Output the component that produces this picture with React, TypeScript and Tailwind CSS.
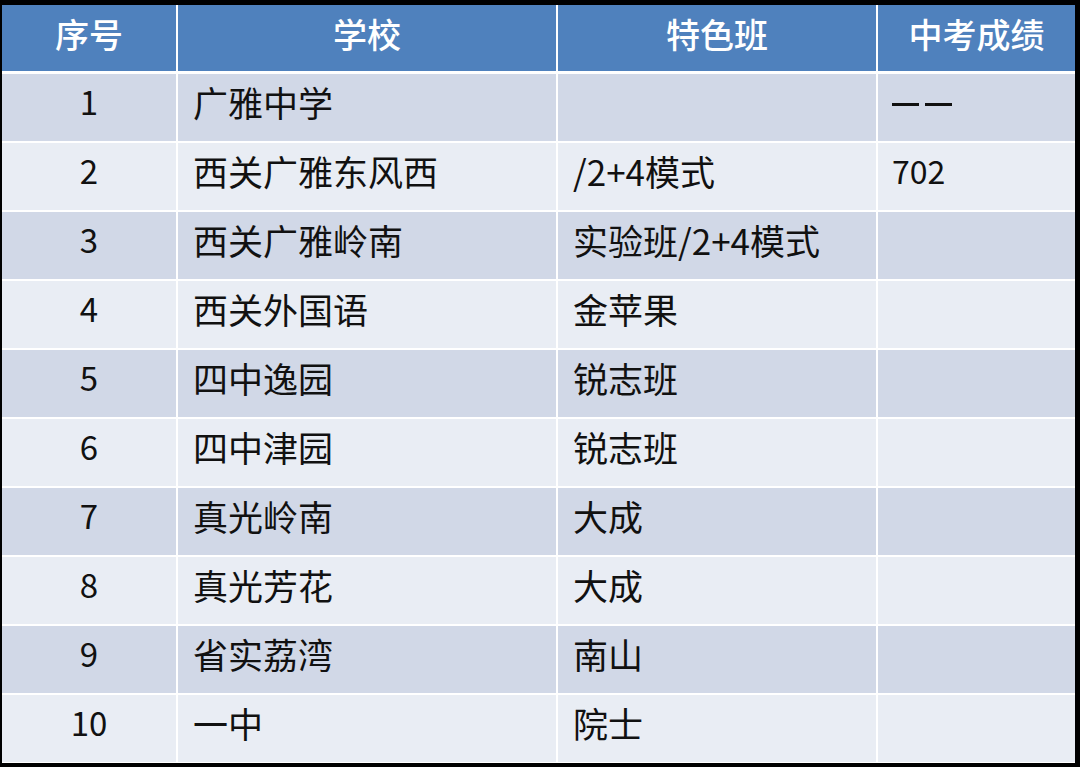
import React from "react";

const rows: [string, string, string, string][] = [
  ["1", "广雅中学", "", "——"],
  ["2", "西关广雅东风西", "/2+4模式", "702"],
  ["3", "西关广雅岭南", "实验班/2+4模式", ""],
  ["4", "西关外国语", "金苹果", ""],
  ["5", "四中逸园", "锐志班", ""],
  ["6", "四中津园", "锐志班", ""],
  ["7", "真光岭南", "大成", ""],
  ["8", "真光芳花", "大成", ""],
  ["9", "省实荔湾", "南山", ""],
  ["10", "一中", "院士", ""],
];

export default function App() {
  return (
    <div className="w-[1080px] h-[767px] bg-black pt-[5px] pl-[2px] overflow-hidden">
      <div className="w-[1073px] bg-white flex flex-col gap-[2px] pb-[1px] text-[#111] font-['Noto_Sans_CJK_SC',sans-serif]">
        <div className="h-[66px] mb-[1px] grid grid-cols-[174px_378px_318px_197px] gap-x-[2px] text-white text-[34px] font-medium leading-none">
          <div className="bg-[#4f81bd] flex items-center justify-center pb-[9px]">序号</div>
          <div className="bg-[#4f81bd] flex items-center justify-center pb-[9px]">学校</div>
          <div className="bg-[#4f81bd] flex items-center justify-center pb-[9px]">特色班</div>
          <div className="bg-[#4f81bd] flex items-center justify-center pb-[9px]">中考成绩</div>
        </div>
        {rows.map((r, i) => {
          const bg = i % 2 === 0 ? "bg-[#d1d8e7]" : "bg-[#e9edf4]";
          return (
            <div
              key={i}
              className="h-[67px] grid grid-cols-[174px_378px_318px_197px] gap-x-[2px] text-[35px] leading-none"
            >
              <div className={`${bg} flex items-center justify-center pb-[12px] text-[33px]`}>{r[0]}</div>
              <div className={`${bg} flex items-center pl-[15px] pb-[13px]`}>{r[1]}</div>
              <div className={`${bg} flex items-center pl-[15px] pb-[13px]`}>{r[2]}</div>
              <div className={`${bg} flex items-center pl-[14px] pb-[13px]`}>
                {r[3] === "——" ? (
                  <span className="flex gap-[6px] pt-[6px]">
                    <span className="block w-[27px] h-[3px] bg-[#111]" />
                    <span className="block w-[27px] h-[3px] bg-[#111]" />
                  </span>
                ) : (
                  <span className="text-[32px]">{r[3]}</span>
                )}
              </div>
            </div>
          );
        })}
      </div>
    </div>
  );
}
